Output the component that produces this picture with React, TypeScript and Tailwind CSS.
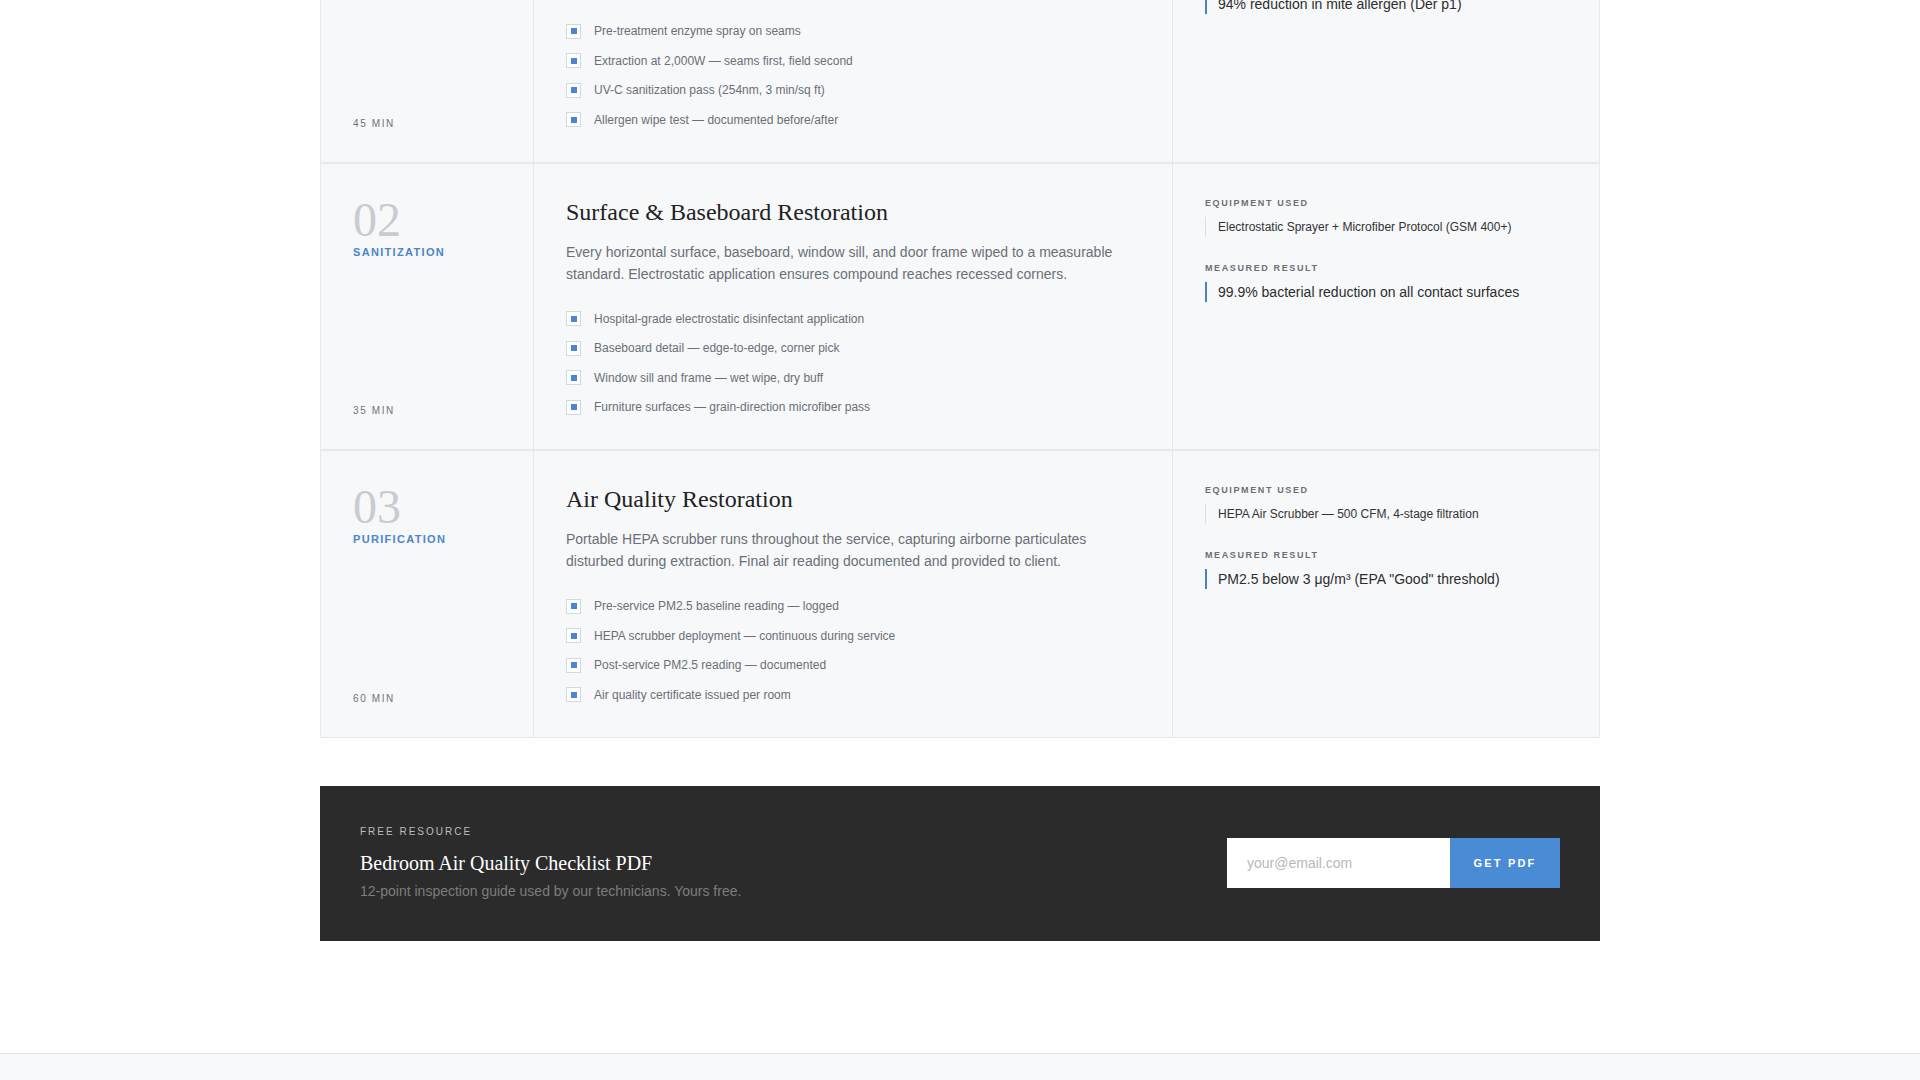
import React from "react";

type Step = {
  num: string;
  tag: string;
  time: string;
  title: string;
  desc: string;
  items: string[];
  equipment: string;
  result: string;
};

const steps: Step[] = [
  {
    num: "01",
    tag: "EXTRACTION",
    time: "45 MIN",
    title: "Mattress & Carpet Deep Extraction",
    desc: "Hot-water extraction lifts embedded allergens from mattress seams and carpet fibers. Every pass is logged so the before and after can be compared.",
    items: [
      "Pre-treatment enzyme spray on seams",
      "Extraction at 2,000W — seams first, field second",
      "UV-C sanitization pass (254nm, 3 min/sq ft)",
      "Allergen wipe test — documented before/after",
    ],
    equipment: "Truck-mount extractor + UV-C wand (254nm)",
    result: "94% reduction in mite allergen (Der p1)",
  },
  {
    num: "02",
    tag: "SANITIZATION",
    time: "35 MIN",
    title: "Surface & Baseboard Restoration",
    desc: "Every horizontal surface, baseboard, window sill, and door frame wiped to a measurable standard. Electrostatic application ensures compound reaches recessed corners.",
    items: [
      "Hospital-grade electrostatic disinfectant application",
      "Baseboard detail — edge-to-edge, corner pick",
      "Window sill and frame — wet wipe, dry buff",
      "Furniture surfaces — grain-direction microfiber pass",
    ],
    equipment: "Electrostatic Sprayer + Microfiber Protocol (GSM 400+)",
    result: "99.9% bacterial reduction on all contact surfaces",
  },
  {
    num: "03",
    tag: "PURIFICATION",
    time: "60 MIN",
    title: "Air Quality Restoration",
    desc: "Portable HEPA scrubber runs throughout the service, capturing airborne particulates disturbed during extraction. Final air reading documented and provided to client.",
    items: [
      "Pre-service PM2.5 baseline reading — logged",
      "HEPA scrubber deployment — continuous during service",
      "Post-service PM2.5 reading — documented",
      "Air quality certificate issued per room",
    ],
    equipment: "HEPA Air Scrubber — 500 CFM, 4-stage filtration",
    result: "PM2.5 below 3 μg/m³ (EPA \"Good\" threshold)",
  },
];

function StepRow({ step, first }: { step: Step; first: boolean }) {
  return (
    <div
      className={`grid grid-cols-[1fr_3fr_2fr] ${first ? "" : "border-t-2 border-[#e6e8eb]"}`}
    >
      {/* Number column */}
      <div className="flex flex-col justify-between border-r border-[#e6e8eb] px-8 pt-[32px] pb-[30px]">
        <div>
          <div className="font-['Liberation_Serif',serif] text-5xl leading-none text-[#c8ccd1]">
            {step.num}
          </div>
          <div className="mt-px text-[11px] font-bold leading-[15px] tracking-[0.12em] text-[#4a86c8]">
            {step.tag}
          </div>
        </div>
        <div className="text-[10px] leading-4 tracking-[0.16em] text-[#6f737a]">
          {step.time}
        </div>
      </div>

      {/* Detail column */}
      <div className="border-r border-[#e6e8eb] px-8 pt-[33px] pb-[33px]">
        <h3 className="font-['Liberation_Serif',serif] text-2xl leading-[30px] text-[#222222]">
          {step.title}
        </h3>
        <p className="mt-3.5 text-sm leading-[22px] text-[#6b6f76]">{step.desc}</p>
        <ul className="mt-[25px] flex flex-col gap-[11.5px]">
          {step.items.map((item) => (
            <li
              key={item}
              className="flex items-center gap-[13px] text-xs leading-[18px] text-[#6b6f76]"
            >
              <span className="flex h-[15px] w-[15px] shrink-0 items-center justify-center border border-[#d3d9e0] bg-white">
                <span className="h-1.5 w-1.5 bg-[#4a86d0]" />
              </span>
              {item}
            </li>
          ))}
        </ul>
      </div>

      {/* Equipment column */}
      <div className="px-8 pt-[33px]">
        <div className="text-[9px] font-bold leading-3 tracking-[0.18em] text-[#6b6f76]">
          EQUIPMENT USED
        </div>
        <div className="mt-2 border-l border-[#dcdfe3] pl-3 text-xs leading-5 text-[#333333]">
          {step.equipment}
        </div>
        <div className="mt-[25px] text-[9px] font-bold leading-3 tracking-[0.18em] text-[#6b6f76]">
          MEASURED RESULT
        </div>
        <div className="mt-2 border-l-2 border-[#4a7fc1] pl-[11px] text-sm leading-5 text-[#2d2d2d]">
          {step.result}
        </div>
      </div>
    </div>
  );
}

export default function App() {
  return (
    <div className="h-screen overflow-hidden bg-white font-['Liberation_Sans',Arial,sans-serif]">
      <div className="-mt-[125px]">
        <section className="pb-28">
          <div className="mx-auto w-[1280px]">
            {/* Protocol table */}
            <div className="border border-[#e6e8eb] bg-[#f7f8fa]">
              {steps.map((s, i) => (
                <StepRow key={s.num} step={s} first={i === 0} />
              ))}
            </div>

            {/* Free resource banner */}
            <div className="mt-12 flex h-[155px] items-center justify-between bg-[#2b2b2b] px-10">
              <div>
                <div className="text-[10px] leading-[14px] tracking-[0.2em] text-[#bdbdbd]">
                  FREE RESOURCE
                </div>
                <div className="mt-2.5 font-['Liberation_Serif',serif] text-xl leading-7 text-white">
                  Bedroom Air Quality Checklist PDF
                </div>
                <div className="mt-1 text-sm leading-5 text-[#7d7d7d]">
                  12-point inspection guide used by our technicians. Yours free.
                </div>
              </div>
              <div className="flex">
                <input
                  type="email"
                  placeholder="your@email.com"
                  className="h-[50px] w-[223px] bg-white px-5 text-sm text-[#333] outline-none placeholder:text-[#b8b8b8]"
                />
                <button className="h-[50px] w-[110px] bg-[#4a8bd6] text-[11px] font-bold tracking-[0.2em] text-white">
                  GET PDF
                </button>
              </div>
            </div>
          </div>
        </section>

        <footer className="h-[200px] border-t border-[#e3e3e3] bg-[#f8f9fa]" />
      </div>
    </div>
  );
}
